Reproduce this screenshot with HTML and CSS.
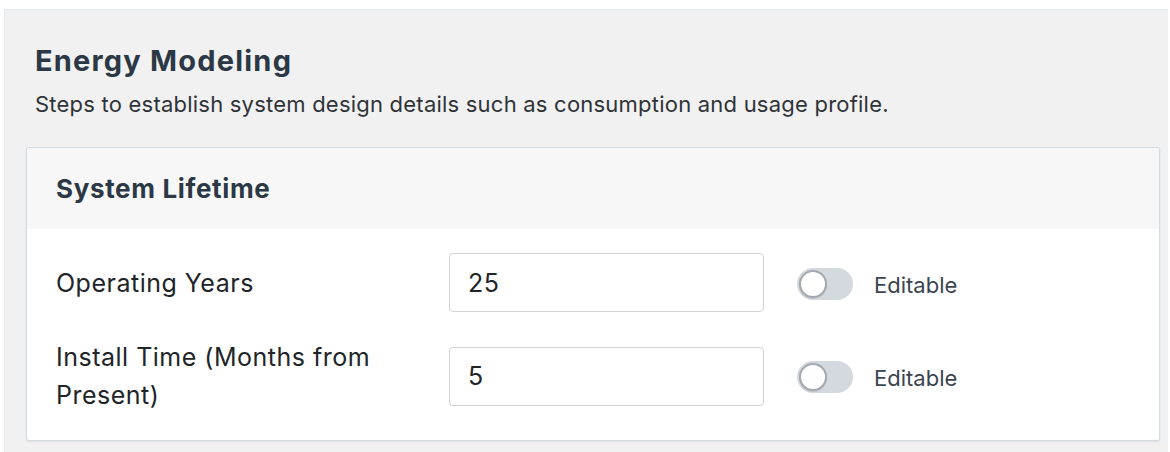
FILE: index.html
```html
<!DOCTYPE html>
<html lang="en">
<head>
<meta charset="utf-8">
<title>Energy Modeling</title>
<link rel="stylesheet" href="styles.css">
</head>
<body>
<section class="panel">
  <header class="panel-head">
    <h1 class="panel-title">Energy Modeling</h1>
    <p class="panel-sub">Steps to establish system design details such as consumption and usage profile.</p>
  </header>
  <div class="card">
    <div class="card-head">
      <h2 class="card-title">System Lifetime</h2>
    </div>
    <div class="card-body">
      <div class="row">
        <label class="row-label">Operating Years</label>
        <div class="field">25</div>
        <div class="switch"><span class="knob"></span></div>
        <span class="switch-label">Editable</span>
      </div>
      <div class="row">
        <label class="row-label">Install Time (Months from Present)</label>
        <div class="field">5</div>
        <div class="switch"><span class="knob"></span></div>
        <span class="switch-label">Editable</span>
      </div>
    </div>
  </div>
</section>
</body>
</html>
```
FILE: styles.css
```css
html, body {
  margin: 0;
  padding: 0;
  background: #ffffff;
}
body {
  font-family: Inter, "Liberation Sans", Arial, sans-serif;
}
.panel {
  margin: 9px 2px 0 4px;
  background: #f1f1f1;
  border-top: 1px solid #e3e8ed;
  border-left: 1px solid #e3e8ed;
  padding: 34px 8px 40px 21px;
}
.panel-head {
  padding-left: 9px;
}
.panel-title {
  margin: 0;
  font-size: 29px;
  line-height: 34px;
  font-weight: 700;
  letter-spacing: 1.2px;
  color: #2c3845;
}
.panel-sub {
  margin: 12px 0 0;
  font-size: 22px;
  line-height: 28px;
  letter-spacing: 0.22px;
  color: #2f3338;
}
.card {
  margin-top: 29px;
  background: #ffffff;
  border: 1px solid #d3dbe3;
  border-radius: 3px;
  box-shadow: 0 1px 2px rgba(60, 80, 100, 0.12);
}
.card-head {
  height: 81px;
  display: flex;
  align-items: center;
  padding-left: 29px;
  background: #f7f7f7;
  border-radius: 3px 3px 0 0;
}
.card-title {
  margin: 0;
  font-size: 26px;
  font-weight: 700;
  letter-spacing: 0.65px;
  color: #2c3845;
}
.card-body {
  padding: 24px 0 26px 29px;
  display: flex;
  flex-direction: column;
  gap: 26px;
}
.row {
  display: grid;
  grid-template-columns: 393px 315px auto auto;
  align-items: center;
  justify-content: start;
}
.row-label {
  font-size: 25px;
  line-height: 38px;
  letter-spacing: 0.5px;
  color: #212529;
  padding-right: 40px;
}
.field {
  box-sizing: border-box;
  height: 59px;
  border: 1px solid #cfd3d6;
  border-radius: 4px;
  background: #ffffff;
  padding-left: 18px;
  display: flex;
  align-items: center;
  font-size: 25px;
  letter-spacing: 0.4px;
  color: #212529;
}
.switch {
  margin-left: 33px;
  margin-top: 2px;
  width: 56px;
  height: 32px;
  border-radius: 16px;
  background: #d3d9df;
  box-sizing: border-box;
  padding: 2px;
  display: flex;
  align-items: center;
}
.knob {
  box-sizing: border-box;
  width: 28px;
  height: 28px;
  border-radius: 50%;
  background: #ffffff;
  border: 2px solid #a3a9af;
  box-shadow: 0 1px 1px rgba(0, 0, 0, 0.1);
}
.switch-label {
  margin-left: 21px;
  padding-top: 4px;
  font-size: 22px;
  color: #3b4550;
}
```
